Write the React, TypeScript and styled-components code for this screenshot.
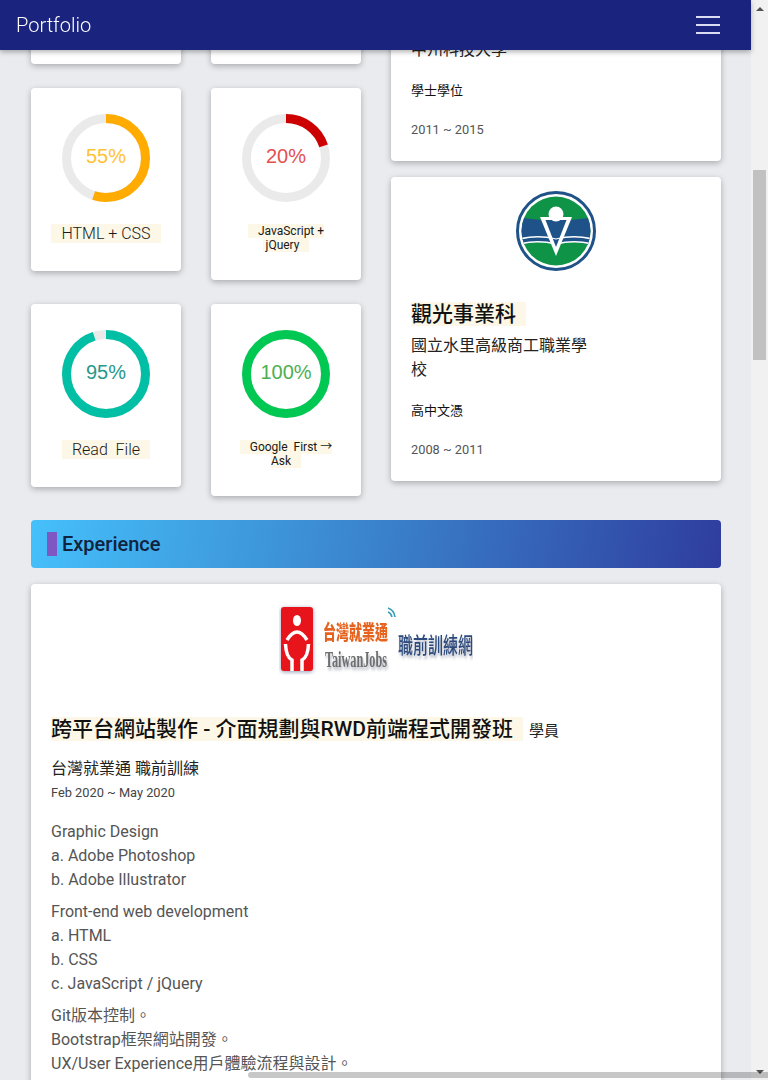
import React from 'react';
import styled, { createGlobalStyle } from 'styled-components';

const GlobalStyle = createGlobalStyle`
  html, body {
    margin: 0;
    padding: 0;
    height: 1080px;
    overflow: hidden;
    background: #e9ebef;
    font-family: Roboto, "Noto Sans CJK TC", sans-serif;
  }
  * { box-sizing: border-box; }
`;

const Page = styled.div`
  position: relative;
  display: flex;
  width: 768px;
  height: 1080px;
  overflow: hidden;
`;

const Main = styled.main`
  width: 751px;
  flex: none;
  padding: 0 30px 0 31px;
`;

const Navbar = styled.header`
  position: fixed;
  top: 0;
  left: 0;
  width: 751px;
  height: 50px;
  z-index: 10;
  display: flex;
  align-items: center;
  justify-content: space-between;
  padding: 0 31px 0 16px;
  background: #1a237e;
  box-shadow: 0 2px 5px rgba(0, 0, 0, 0.3);
`;

const Brand = styled.div`
  color: #fff;
  font-size: 20px;
  font-weight: 300;
`;

const Burger = styled.div`
  display: flex;
  flex-direction: column;
  gap: 6px;
  width: 24px;
`;

const BurgerLine = styled.span`
  display: block;
  height: 2px;
  background: #d9dcf3;
`;

const TopGrid = styled.div`
  display: grid;
  grid-template-columns: 330px 330px;
  column-gap: 30px;
  align-items: start;
`;

const SkillGrid = styled.div`
  display: grid;
  grid-template-columns: 150px 150px;
  column-gap: 30px;
  row-gap: 24px;
  align-items: start;
`;

const Card = styled.div`
  background: #fff;
  border-radius: 4px;
  box-shadow: 0 2px 6px rgba(0, 0, 0, 0.28);
`;

const StubCard = styled(Card)`
  height: 64px;
`;

const SkillCard = styled(Card)`
  display: flex;
  flex-direction: column;
  align-items: center;
  padding: 26px 19px 28px;
`;

const Donut = styled.div`
  position: relative;
  width: 88px;
  height: 88px;
  margin-bottom: 22px;
`;

const Percent = styled.div<{ $color: string }>`
  position: absolute;
  inset: 0 0 4px 0;
  display: flex;
  align-items: center;
  justify-content: center;
  font-family: "Liberation Sans", Arial, sans-serif;
  font-size: 20px;
  color: ${(p) => p.$color};
`;

const SkillLabelWrap = styled.div<{ $small?: boolean }>`
  width: 100%;
  text-align: center;
  color: #1a1a1a;
  font-size: ${(p) => (p.$small ? '12px' : '16px')};
  line-height: ${(p) => (p.$small ? '14px' : '19px')};
`;

const SkillLabel = styled.span<{ $small?: boolean }>`
  background: #fcf7e6;
  padding: 0 10px;
  font-weight: ${(p) => (p.$small ? 400 : 300)};
`;

const EduColumn = styled.div`
  display: flex;
  flex-direction: column;
  gap: 16px;
`;

const EduCard = styled(Card)<{ $cut?: boolean }>`
  padding: ${(p) => (p.$cut ? '38px' : '14px')} 20px 21px;
`;

const LogoRow = styled.div`
  display: flex;
  justify-content: center;
`;

const EduLogoRow = styled(LogoRow)`
  height: 80px;
  margin-bottom: 30px;
`;

const Title = styled.span`
  background: #fcf7e6;
  color: #111;
  font-size: 21px;
  font-weight: 500;
  line-height: 24px;
  padding-right: 10px;
`;

const TitleRow = styled.div`
  height: 24px;
  padding-top: 1px;
  margin-bottom: 9px;
  line-height: 24px;
`;

const School = styled.div`
  max-width: 180px;
  font-size: 16px;
  line-height: 24px;
  color: #222;
`;

const Degree = styled.div`
  margin-top: 19px;
  font-size: 13px;
  line-height: 20px;
  color: #111;
`;

const Years = styled.div`
  margin-top: 19px;
  font-size: 12.8px;
  line-height: 20px;
  color: #555;
`;

const Banner = styled.div`
  display: flex;
  align-items: center;
  height: 48px;
  margin-top: 24px;
  padding-left: 16px;
  border-radius: 4px;
  background: linear-gradient(100deg, #45c0fa 0%, #3a82cc 50%, #2f3d9e 100%);
`;

const BannerMark = styled.span`
  width: 10px;
  height: 24px;
  margin-right: 5px;
  background: #7e57c2;
`;

const BannerText = styled.h2`
  margin: 0;
  font-size: 20px;
  font-weight: 500;
  color: #10233f;
`;

const ExpCard = styled(Card)`
  margin-top: 16px;
  padding: 19px 20px 40px;
`;

const ExpLogoRow = styled(LogoRow)`
  height: 72px;
  margin-bottom: 41px;
`;

const ExpTitleRow = styled.div`
  height: 24px;
  padding-top: 1px;
  line-height: 24px;
  white-space: nowrap;
`;

const Role = styled.span`
  margin-left: 6px;
  font-size: 15px;
  color: #222;
`;

const Employer = styled.div`
  margin-top: 17px;
  font-size: 16px;
  line-height: 24px;
  color: #222;
`;

const ExpDate = styled.div`
  margin: 2px 0 17px;
  font-size: 12.8px;
  line-height: 20px;
  color: #444;
`;

const Paragraph = styled.p`
  margin: 0 0 8px;
  font-size: 16px;
  line-height: 24px;
  color: #555;
`;

const ScrollTrack = styled.div`
  width: 17px;
  height: 1080px;
  flex: none;
  display: flex;
  flex-direction: column;
  align-items: center;
  background: #f1f1f1;
`;

const ArrowBox = styled.div<{ $down?: boolean }>`
  width: 17px;
  height: 17px;
  flex: none;
  display: flex;
  align-items: center;
  justify-content: center;
  margin-top: ${(p) => (p.$down ? 'auto' : '0')};
  &::after {
    content: '';
    border-left: 4px solid transparent;
    border-right: 4px solid transparent;
    ${(p) => (p.$down ? 'border-top: 4px solid #505050;' : 'border-bottom: 4px solid #505050;')}
  }
`;

const ScrollThumb = styled.div`
  width: 13px;
  height: 190px;
  margin-top: 153px;
  flex: none;
  background: #c1c1c1;
`;

const HorizontalThumb = styled.div`
  position: absolute;
  left: 248px;
  right: 0;
  bottom: 2px;
  height: 6px;
  border-radius: 3px 0 0 3px;
  background: rgba(0, 0, 0, 0.22);
  z-index: 20;
`;

const LogoSvg = styled.svg`
  filter: blur(0.4px);
`;

const RedBadge = styled.rect`
  filter: drop-shadow(0 1px 2px rgba(70, 90, 130, 0.6));
`;

const ShadowText = styled.text`
  filter: drop-shadow(1px 2px 1px rgba(80, 90, 120, 0.45));
`;

interface Skill {
  value: number;
  stroke: string;
  text: string;
  label: React.ReactNode;
  small?: boolean;
}

const skills: Skill[] = [
  { value: 55, stroke: '#ffab00', text: '#ffc233', label: 'HTML + CSS' },
  { value: 20, stroke: '#cc0000', text: '#e35050', label: <>JavaScript + &nbsp;jQuery</>, small: true },
  { value: 95, stroke: '#00bfa5', text: '#26988a', label: <>Read&nbsp; File</> },
  { value: 100, stroke: '#00c853', text: '#4caf50', label: <>Google&nbsp; First → Ask</>, small: true },
];

function Ring({ value, stroke }: { value: number; stroke: string }) {
  const r = 39.5;
  const len = 2 * Math.PI * r;
  return (
    <svg width="88" height="88" viewBox="0 0 88 88">
      <circle cx="44" cy="44" r={r} fill="none" stroke="#eaeaea" strokeWidth="9" />
      <circle
        cx="44"
        cy="44"
        r={r}
        fill="none"
        stroke={stroke}
        strokeWidth="9"
        strokeDasharray={`${(len * value) / 100} ${len}`}
        transform="rotate(-90 44 44)"
      />
    </svg>
  );
}

function SchoolLogo() {
  return (
    <svg width="80" height="80" viewBox="0 0 80 80">
      <defs>
        <clipPath id="disc">
          <circle cx="40" cy="40" r="34.5" />
        </clipPath>
      </defs>
      <circle cx="40" cy="40" r="38.5" fill="#fff" stroke="#1f5288" strokeWidth="3" />
      <g clipPath="url(#disc)">
        <rect width="80" height="80" fill="#0f9347" />
        <path d="M0 26 Q40 33 80 26 V56 Q60 48 40 53 Q20 48 0 56 Z" fill="#1f5288" />
        <path d="M0 49 Q20 43 40 48 Q60 43 80 49" fill="none" stroke="#fff" strokeWidth="1.6" />
        <path d="M0 54 Q20 48 40 53 Q60 48 80 54" fill="none" stroke="#fff" strokeWidth="1.6" />
      </g>
      <path d="M24 26 H56 L40 65 Z" fill="#fff" />
      <path d="M29.5 29 H50.5 L40 56 Z" fill="#1f5288" />
      <path d="M33 47 Q37 47 40 48 Q43 47 47 47" fill="none" stroke="#fff" strokeWidth="1.2" />
      <circle cx="40" cy="23" r="7.5" fill="#fff" />
    </svg>
  );
}

function JobsLogo() {
  return (
    <LogoSvg width="194" height="72" viewBox="0 0 194 72">
      <RedBadge x="2" y="4" width="32" height="64" rx="3" fill="#e8141c" />
      <ellipse cx="18" cy="17.5" rx="4" ry="5.5" fill="#fff" />
      <path d="M8 37 Q18 21 28 37" fill="none" stroke="#fff" strokeWidth="3.5" />
      <path d="M6.5 41 Q7 54 13 57 V68" fill="none" stroke="#fff" strokeWidth="3.5" />
      <path d="M29.5 41 Q29 54 23 57 V68" fill="none" stroke="#fff" strokeWidth="3.5" />
      <text
        x="44"
        y="24"
        fontFamily='"Noto Sans CJK TC", sans-serif'
        fontSize="13"
        fontWeight="900"
        fill="#e5631e"
        textLength="65"
        transform="scale(1 1.55)"
      >
        台灣就業通
      </text>
      <ShadowText
        x="46"
        y="44"
        fontFamily='"Liberation Serif", serif'
        fontSize="16"
        fontWeight="700"
        fill="#6f6f6f"
        textLength="62"
        lengthAdjust="spacingAndGlyphs"
        transform="scale(1 1.45)"
      >
        TaiwanJobs
      </ShadowText>
      <path d="M109 5 Q115 7 116 14" fill="none" stroke="#3a9fb5" strokeWidth="1.6" />
      <path d="M109 9 Q112 10 113 14" fill="none" stroke="#3a9fb5" strokeWidth="1.6" />
      <ShadowText
        x="119"
        y="34.5"
        fontFamily='"Noto Sans CJK TC", sans-serif'
        fontSize="15"
        fontWeight="500"
        fill="#2c4a7c"
        textLength="75"
        transform="scale(1 1.45)"
      >
        職前訓練網
      </ShadowText>
    </LogoSvg>
  );
}

export default function App() {
  return (
    <Page>
      <GlobalStyle />
      <Navbar>
        <Brand>Portfolio</Brand>
        <Burger>
          <BurgerLine />
          <BurgerLine />
          <BurgerLine />
        </Burger>
      </Navbar>
      <Main>
        <TopGrid>
          <SkillGrid>
            <StubCard />
            <StubCard />
            {skills.map((s, i) => (
              <SkillCard key={i}>
                <Donut>
                  <Ring value={s.value} stroke={s.stroke} />
                  <Percent $color={s.text}>{s.value}%</Percent>
                </Donut>
                <SkillLabelWrap $small={s.small}>
                  <SkillLabel $small={s.small}>{s.label}</SkillLabel>
                </SkillLabelWrap>
              </SkillCard>
            ))}
          </SkillGrid>
          <EduColumn>
            <EduCard $cut>
              <School>中州科技大學</School>
              <Degree>學士學位</Degree>
              <Years>2011 ~ 2015</Years>
            </EduCard>
            <EduCard>
              <EduLogoRow>
                <SchoolLogo />
              </EduLogoRow>
              <TitleRow>
                <Title>觀光事業科</Title>
              </TitleRow>
              <School>國立水里高級商工職業學校</School>
              <Degree>高中文憑</Degree>
              <Years>2008 ~ 2011</Years>
            </EduCard>
          </EduColumn>
        </TopGrid>
        <Banner>
          <BannerMark />
          <BannerText>Experience</BannerText>
        </Banner>
        <ExpCard>
          <ExpLogoRow>
            <JobsLogo />
          </ExpLogoRow>
          <ExpTitleRow>
            <Title>跨平台網站製作 - 介面規劃與RWD前端程式開發班</Title>
            <Role>學員</Role>
          </ExpTitleRow>
          <Employer>台灣就業通 職前訓練</Employer>
          <ExpDate>Feb 2020 ~ May 2020</ExpDate>
          <Paragraph>
            Graphic Design<br />a. Adobe Photoshop<br />b. Adobe Illustrator
          </Paragraph>
          <Paragraph>
            Front-end web development<br />a. HTML<br />b. CSS<br />c. JavaScript / jQuery
          </Paragraph>
          <Paragraph>
            Git版本控制。<br />Bootstrap框架網站開發。<br />UX/User Experience用戶體驗流程與設計。
          </Paragraph>
        </ExpCard>
      </Main>
      <ScrollTrack>
        <ArrowBox />
        <ScrollThumb />
        <ArrowBox $down />
      </ScrollTrack>
      <HorizontalThumb />
    </Page>
  );
}
